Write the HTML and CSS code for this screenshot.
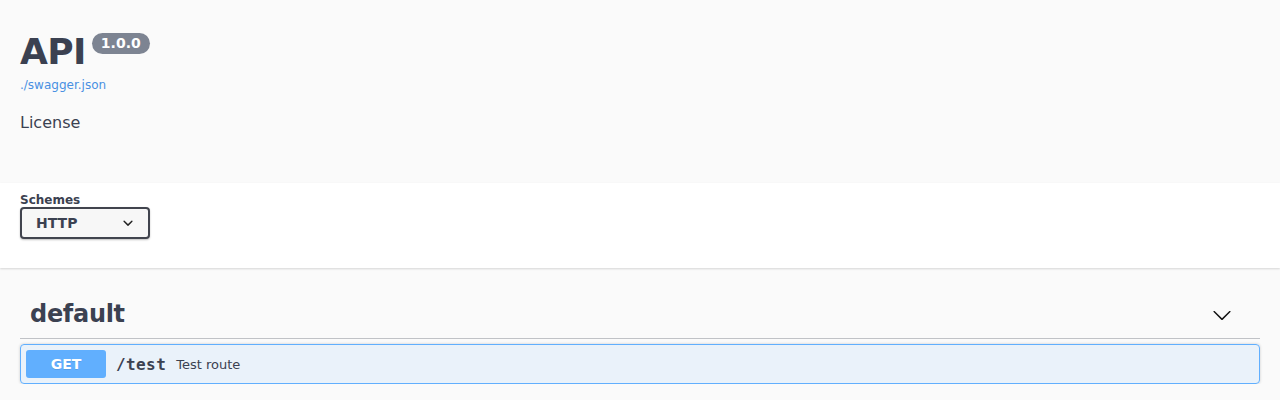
FILE: index.html
```html
<!DOCTYPE html>
<html>
<head>
<meta charset="utf-8">
<link rel="stylesheet" href="styles.css">
</head>
<body>
<div class="info">
  <div class="hgroup">
    <h2 class="title">API</h2>
    <span class="version">1.0.0</span>
  </div>
  <a class="url" href="#">./swagger.json</a>
  <div class="license">License</div>
</div>
<section class="schemes">
  <div class="schemes-inner">
    <div class="label">Schemes</div>
    <div class="select">
      <span>HTTP</span>
      <svg class="sel-arrow" width="20" height="20" viewBox="0 0 20 20"><path d="M13.418 7.859a.695.695 0 01.978 0 .68.68 0 010 .969l-3.908 3.83a.697.697 0 01-.979 0l-3.908-3.83a.68.68 0 010-.969.695.695 0 01.978 0L10 11l3.418-3.141z" fill="#222"/></svg>
    </div>
  </div>
</section>
<div class="tags">
  <div class="tag">
    <h3 class="tag-name">default</h3>
    <button class="expand">
      <svg width="20" height="20" viewBox="0 0 20 20"><path d="M17.418 6.109c.272-.268.709-.268.979 0s.271.701 0 .969l-7.908 7.830c-.27.268-.707.268-.979 0l-7.908-7.830c-.27-.268-.27-.701 0-.969.271-.268.709-.268.979 0L10 13.25l7.418-7.141z" fill="#111"/></svg>
    </button>
  </div>
  <div class="opblock">
    <span class="method">GET</span>
    <span class="path">/test</span>
    <span class="desc">Test route</span>
  </div>
</div>
</body>
</html>
```
FILE: styles.css
```css
html, body {
  margin: 0;
  padding: 0;
}
body {
  background: #fafafa;
  font-family: "DejaVu Sans", sans-serif;
  color: #3b4151;
}
.info {
  padding: 31px 20px 0;
  height: 152px;
}
.hgroup {
  display: flex;
  align-items: flex-start;
}
.title {
  margin: 0;
  font-size: 36px;
  line-height: 42px;
  font-weight: 700;
  letter-spacing: -0.6px;
  color: #3b4151;
}
.version {
  margin: 2px 0 0 6px;
  padding: 2px 9px;
  border-radius: 57px;
  background: #7d8492;
  color: #fff;
  font-size: 14px;
  line-height: 17px;
  font-weight: 700;
}
.url {
  display: block;
  margin-top: 5px;
  font-size: 12px;
  line-height: 14px;
  color: #4990e2;
  text-decoration: none;
}
.license {
  margin-top: 21px;
  font-size: 16px;
  line-height: 19px;
}
.schemes {
  background: #fff;
  box-shadow: 0 1px 2px 0 rgba(0,0,0,.15);
  padding: 10px 20px 29px;
}
.label {
  font-size: 12px;
  line-height: 14px;
  font-weight: 700;
}
.select {
  box-sizing: border-box;
  width: 130px;
  height: 32px;
  border: 2px solid #41444e;
  border-radius: 4px;
  background: #f7f7f7;
  box-shadow: 0 1px 2px 0 rgba(0,0,0,.25);
  display: flex;
  align-items: center;
  justify-content: space-between;
  padding: 0 10px 0 14px;
  font-size: 14px;
  font-weight: 700;
}
.tags {
  padding: 20px 20px 0;
}
.tag {
  display: flex;
  align-items: center;
  padding: 12px 20px 9px 10px;
  border-bottom: 1px solid rgba(59,65,81,.3);
  margin-bottom: 5px;
}
.tag-name {
  flex: 1;
  margin: 0;
  font-size: 24px;
  line-height: 29px;
  font-weight: 700;
  letter-spacing: -0.3px;
}
.expand {
  border: none;
  background: none;
  padding: 0 8px 0 0;
  display: flex;
}
.opblock {
  display: flex;
  align-items: center;
  padding: 5px;
  border: 1px solid #61affe;
  border-radius: 4px;
  background: rgba(97,175,254,.1);
  box-shadow: 0 0 3px rgba(0,0,0,.19);
}
.method {
  width: 80px;
  padding: 6px 0;
  line-height: 16px;
  text-align: center;
  border-radius: 3px;
  background: #61affe;
  color: #fff;
  font-size: 14px;
  font-weight: 700;
  text-shadow: 0 1px 0 rgba(0,0,0,.1);
}
.path {
  padding: 0 10px;
  font-family: "DejaVu Sans Mono", monospace;
  font-size: 16px;
  font-weight: 700;
  letter-spacing: 0.4px;
}
.desc {
  font-size: 13px;
}
```
